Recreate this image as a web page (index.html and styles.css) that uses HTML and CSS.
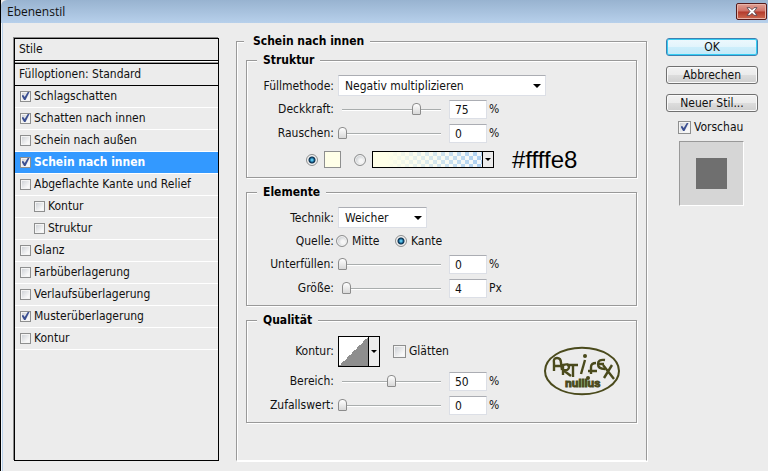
FILE: index.html
```html
<!DOCTYPE html>
<html lang="de">
<head>
<meta charset="utf-8">
<title>Ebenenstil</title>
<link rel="stylesheet" href="styles.css">
</head>
<body>
<header class="titlebar">
  <h1>Ebenenstil</h1>
  <button class="close" aria-label="Schließen">
    <svg width="12" height="9" viewBox="0 0 12 9"><path d="M1 .7h3l2 2 2-2h3L8 4.500l3 3.800H8l-2-2-2 2H1l3-3.800z" fill="#fff" stroke="#5b4a52" stroke-width=".9"/></svg>
  </button>
</header>
<main class="dialog">
  <nav class="styles">
    <div class="styles-head">Stile</div>
    <div class="styles-head second">Fülloptionen: Standard</div>
    <label class="item"><input type="checkbox" checked>Schlagschatten</label>
    <label class="item"><input type="checkbox" checked>Schatten nach innen</label>
    <label class="item"><input type="checkbox">Schein nach außen</label>
    <label class="item selected"><input type="checkbox" checked>Schein nach innen</label>
    <label class="item"><input type="checkbox">Abgeflachte Kante und Relief</label>
    <label class="item sub"><input type="checkbox">Kontur</label>
    <label class="item sub"><input type="checkbox">Struktur</label>
    <label class="item"><input type="checkbox">Glanz</label>
    <label class="item"><input type="checkbox">Farbüberlagerung</label>
    <label class="item"><input type="checkbox">Verlaufsüberlagerung</label>
    <label class="item"><input type="checkbox" checked>Musterüberlagerung</label>
    <label class="item"><input type="checkbox">Kontur</label>
  </nav>

  <fieldset class="panel">
    <legend>Schein nach innen</legend>

    <fieldset class="group structure">
      <legend>Struktur</legend>
      <div class="row">
        <label class="name" for="mode">Füllmethode:</label>
        <span class="select wide"><select id="mode"><option>Negativ multiplizieren</option></select></span>
      </div>
      <div class="row">
        <label class="name" for="opacity">Deckkraft:</label>
        <input type="range" value="75" aria-label="Deckkraft">
        <input type="text" id="opacity" value="75"><span class="unit">%</span>
      </div>
      <div class="row">
        <label class="name" for="noise">Rauschen:</label>
        <input type="range" value="0" aria-label="Rauschen">
        <input type="text" id="noise" value="0"><span class="unit">%</span>
      </div>
      <div class="row fill">
        <input type="radio" name="fill" aria-label="Farbe" checked>
        <button class="swatch" aria-label="Farbe wählen"></button>
        <input type="radio" name="fill" aria-label="Verlauf">
        <button class="picker gradient" aria-label="Verlauf wählen"><span class="ramp"></span><span class="drop"></span></button>
        <span class="hex">#ffffe8</span>
      </div>
    </fieldset>

    <fieldset class="group elements">
      <legend>Elemente</legend>
      <div class="row">
        <label class="name" for="technique">Technik:</label>
        <span class="select"><select id="technique"><option>Weicher</option></select></span>
      </div>
      <div class="row">
        <span class="name">Quelle:</span>
        <label class="choice"><input type="radio" name="source">Mitte</label>
        <label class="choice"><input type="radio" name="source" checked>Kante</label>
      </div>
      <div class="row">
        <label class="name" for="choke">Unterfüllen:</label>
        <input type="range" value="0" aria-label="Unterfüllen">
        <input type="text" id="choke" value="0"><span class="unit">%</span>
      </div>
      <div class="row">
        <label class="name" for="size">Größe:</label>
        <input type="range" value="4" aria-label="Größe">
        <input type="text" id="size" value="4"><span class="unit">Px</span>
      </div>
    </fieldset>

    <fieldset class="group quality">
      <legend>Qualität</legend>
      <div class="split">
        <div>
          <div class="row">
            <span class="name">Kontur:</span>
            <button class="picker contour" aria-label="Kontur wählen"><span class="ramp"></span><span class="drop"></span></button>
            <label class="smooth"><input type="checkbox">Glätten</label>
          </div>
          <div class="row">
            <label class="name" for="range">Bereich:</label>
            <input type="range" value="50" aria-label="Bereich">
            <input type="text" id="range" value="50"><span class="unit">%</span>
          </div>
          <div class="row">
            <label class="name" for="jitter">Zufallswert:</label>
            <input type="range" value="0" aria-label="Zufallswert">
            <input type="text" id="jitter" value="0"><span class="unit">%</span>
          </div>
        </div>
        <svg class="logo" width="78" height="50" viewBox="0 0 78 50" role="img" aria-label="Artifex nullius">
          <g fill="none" stroke="#4a4a1c" stroke-width="2.400">
            <ellipse cx="39" cy="25" rx="37" ry="23.300" stroke-width="2"/>
            <path d="M11 25V17q-1-5 3-5t4 5l1 7M11 20h8"/>
            <path d="M20 29V19q6-2 6 2t-6 3l8 6"/>
            <path d="M24 19h11M30 19v12"/>
            <path d="M38 28l4-14"/>
            <path d="M48 28V21q0-4 5-4M45 25h9"/>
            <path d="M62 14q-7-1-7 4t7 5M55 18h6"/>
            <path d="M60 19l11 14M69 19l-8 13"/>
          </g>
          <circle cx="42" cy="10" r="2" fill="#4a4a1c"/>
          <text x="22" y="41" class="logo-text">nullius</text>
          <circle cx="45" cy="32" r="2" fill="#4a4a1c"/>
        </svg>
      </div>
    </fieldset>
  </fieldset>

  <aside class="actions">
    <button class="btn primary">OK</button>
    <button class="btn">Abbrechen</button>
    <button class="btn">Neuer Stil...</button>
    <label class="smooth preview-toggle"><input type="checkbox" checked>Vorschau</label>
    <div class="preview"><div></div></div>
  </aside>
</main>
</body>
</html>
```

FILE: styles.css
```css
* { box-sizing: border-box; }

body {
  margin: 0;
  min-height: 100vh;
  display: flex;
  flex-direction: column;
  border-left: 1px solid #000;
  background: #ececec;
  color: #111;
  font: 12px/16px "DejaVu Sans Condensed", "DejaVu Sans", sans-serif;
}

input, button, select { margin: 0; padding: 0; font: inherit; color: inherit; }

.titlebar {
  display: flex;
  justify-content: space-between;
  height: 23px;
  padding: 3px 1px 0 6px;
  border-top-left-radius: 6px;
  background: linear-gradient(#98b3d0, #b7d0eb);
}
.titlebar h1 { margin: 0; font: 12px/17px "Open Sans", sans-serif; }
.close {
  display: grid;
  place-items: center;
  width: 31px;
  height: 17px;
  border: 1px solid #571c1c;
  border-radius: 2px;
  background: linear-gradient(#e0a095, #cf7064 48%, #b33a2c 52%, #cd6a50);
  box-shadow: inset 0 0 0 1px #e8b3a8;
}

.dialog {
  flex: 1;
  display: flex;
  align-items: stretch;
  padding: 10px;
  border-left: 1px solid #f4f8fc;
  box-shadow: inset 1px 0 #b9d1ea;
}

/* Style list */
.styles {
  flex: 0 0 205px;
  margin: 5px 17px 0 2px;
  border: 1px solid #000;
  box-shadow: -1px -1px #8a8a8a;
}
.styles-head {
  height: 22px;
  padding: 1px 4px 0;
  border-bottom: 1px solid #000;
  line-height: 18px;
}
.styles-head.second {
  height: 25px;
  padding-top: 3px;
  border-top: 1px solid #fff;
  box-shadow: inset 0 1px #999, inset 0 2px #000;
}
.item {
  display: flex;
  align-items: center;
  gap: 3px;
  height: 22px;
  padding: 0 4px 1px 5px;
  border-bottom: 1px solid #fff;
  white-space: nowrap;
}
.item.sub { padding-left: 19px; }
.item.selected { background: #3399ff; color: #fff; font-weight: 700; }

/* Etched frames */
fieldset {
  min-width: 0;
  margin: 0;
  border: 1px solid #999;
  box-shadow: 1px 1px #fff, inset 1px 1px #fff;
}
legend {
  height: 16px;
  margin-left: 10px;
  padding: 0 6px;
  background: #ececec;
  color: #000;
  font-weight: 700;
}
.panel { flex: 1; padding: 3px 9px; border-bottom-color: #fff; }
.panel > legend { margin-left: -2px; padding-left: 9px; }
.group { padding: 6px 0 3px; margin-bottom: 6px; }
.elements { padding-bottom: 5px; }
.quality { padding: 5px 0; margin-bottom: 0; }

.row { display: flex; align-items: center; height: 24px; }
.structure .row:nth-of-type(1), .elements .row:nth-of-type(-n+2) { height: 23px; }
.name { width: 87px; margin-right: 4px; text-align: right; }

.select { position: relative; width: 89px; height: 21px; }
.select.wide { width: 208px; }
.select select {
  width: 100%;
  height: 100%;
  padding-left: 6px;
  appearance: none;
  border: 1px solid #dcdfe6;
  border-top-color: #abadb3;
  background: #fff;
}
.select::after, .drop::after {
  content: "";
  border: 4px solid transparent;
  border-top-color: #000;
  border-bottom: 0;
}
.select::after { position: absolute; right: 5px; top: 9px; }

input[type="text"] {
  width: 38px;
  height: 19px;
  margin: 0 2px 0 4px;
  padding: 1px 0 0 5px;
  border: 1px solid #dcdfe6;
  border-top-color: #abadb3;
  background: #fff;
}

input[type="range"] {
  appearance: none;
  width: 107px;
  height: 13px;
  background: linear-gradient(#a9adad 50%, #fff 50%) 4px 6px / 99px 2px no-repeat;
}
input[type="range"]::-webkit-slider-thumb {
  appearance: none;
  width: 9px;
  height: 12px;
  border: 1px solid #8c8c8c;
  border-radius: 4px 4px 1px 1px;
  background: linear-gradient(#fff, #d8d8d8);
}

input[type="radio"] {
  appearance: none;
  width: 12px;
  height: 12px;
  border: 1px solid #8e8f8f;
  border-radius: 50%;
  background: radial-gradient(circle at 60% 60%, #f6f6f6 20%, #c4c8cc 75%);
  box-shadow: inset 0 0 0 1px #f4f4f4;
}
input[type="radio"]:checked {
  background: radial-gradient(circle, #5cc4ea 0 1px, #17618f 2px, #0d2f4c 3px, #e4e4e4 4px);
}

input[type="checkbox"] {
  appearance: none;
  display: grid;
  place-items: center;
  width: 11px;
  height: 11px;
  border: 1px solid #8e8f8f;
  background: linear-gradient(135deg, #c9cdd2, #f8f8f8 75%);
  box-shadow: inset 0 0 0 1px #f4f4f4;
}
input[type="checkbox"]:checked::before {
  content: "";
  width: 8px;
  height: 8px;
  background: #3b4f91;
  clip-path: polygon(0 45%, 22% 38%, 40% 62%, 78% 0, 100% 0, 50% 100%, 32% 100%);
}

.fill { padding-left: 59px; }
.row.fill { height: 29px; }
.swatch { width: 17px; height: 17px; margin: 0 13px 0 6px; border: 1px solid #8e8f8f; background: #ffffe8; }
.picker { display: flex; border: 1px solid #000; background: #ececec; }
.ramp { flex: 1; align-self: stretch; }
.drop { display: grid; place-items: center; align-self: stretch; width: 11px; border-left: 1px solid #000; }
.drop::after { border-width: 3px 3px 0; }
.gradient { width: 122px; height: 17px; margin: 0 18px 0 6px; }
.gradient .ramp {
  background:
    linear-gradient(90deg, #ffffe8 12%, #ffffe800),
    repeating-conic-gradient(#abcff2 0 25%, #f4f8fb 0 50%) 0 0 / 8px 8px;
}
.hex { color: #000; font: 24px/24px "Liberation Sans", sans-serif; }

.choice { display: flex; align-items: center; gap: 4px; width: 59px; margin-left: -2px; }
.choice + .choice { margin-left: 0; }

.split { display: flex; justify-content: space-between; align-items: flex-start; }
.quality .row:first-child { height: 36px; }
.contour { width: 42px; height: 31px; margin-right: 13px; }
.contour .ramp { background: linear-gradient(135deg, #fff 50%, #8e8e8e 50%); }
.smooth { display: flex; align-items: center; gap: 3px; }
.smooth input { width: 13px; height: 13px; }
.logo { flex: none; margin: 13px 15px 0 0; }
.logo-text { fill: #4a4a1c; stroke: #4a4a1c; stroke-width: 1; font: 700 11px "Liberation Sans", sans-serif; }

/* Buttons and preview */
.actions { flex: 0 0 92px; margin: 5px 0 0 19px; }
.btn {
  display: block;
  width: 100%;
  height: 18px;
  margin-bottom: 10px;
  border: 1px solid #707070;
  border-radius: 3px;
  background: linear-gradient(#f2f2f2, #ebebeb 50%, #dddddd 50%, #cfcfcf);
  box-shadow: inset 0 0 0 1px #fafafa;
  line-height: 16px;
}
.btn.primary {
  border-color: #3c7fb1;
  background: linear-gradient(#eef8fd, #e2f4fc 50%, #cdeefb 50%, #c4e9f8);
  box-shadow: inset 0 0 0 1px #35cdf3;
}
.preview-toggle { margin: -3px 0 6px 12px; }
.preview {
  display: grid;
  place-items: center;
  width: 65px;
  height: 65px;
  margin-left: 13px;
  border: 1px solid #fff;
  border-top-color: #999;
  border-left-color: #999;
  background: #d6d6d6;
}
.preview div { width: 31px; height: 31px; background: #6f6f6f; }
```
